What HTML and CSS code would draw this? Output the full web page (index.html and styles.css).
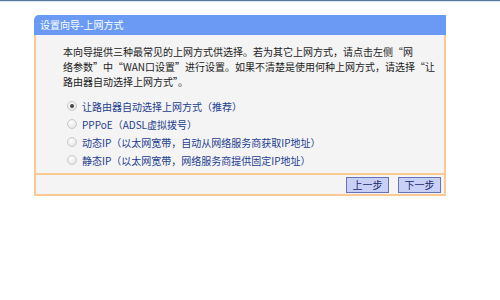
FILE: index.html
```html
<!DOCTYPE html>
<html lang="zh-CN">

<head>
  <meta charset="UTF-8">
  <title>设置向导</title>
  <link rel="stylesheet" href="styles.css">
</head>

<body>
  <div class="topline"></div>
  <div class="panel">
    <div class="panel_title">设置向导-上网方式</div>
    <div class="panel_body">
      <p class="intro">本向导提供三种最常见的上网方式供选择。若为其它上网方式，请点击左侧“网<br>络参数”中“WAN口设置”进行设置。如果不清楚是使用何种上网方式，请选择“让<br>路由器自动选择上网方式”。</p>
      <ul class="options">
        <li><span class="radio checked"></span>让路由器自动选择上网方式（推荐）</li>
        <li><span class="radio"></span>PPPoE（ADSL虚拟拨号）</li>
        <li><span class="radio"></span>动态IP（以太网宽带，自动从网络服务商获取IP地址）</li>
        <li><span class="radio"></span>静态IP（以太网宽带，网络服务商提供固定IP地址）</li>
      </ul>
    </div>
    <div class="panel_foot">
      <button class="btn">上一步</button>
      <button class="btn">下一步</button>
    </div>
  </div>
</body>

</html>
```
FILE: styles.css
```css
body {
  margin: 0;
  background: #fff;
  font-family: "Noto Sans CJK SC", "Liberation Sans", sans-serif;
  font-size: 10px;
  color: #222;
}

.topline {
  height: 1px;
  background: #56789f;
  border-bottom: 1px solid #d9e3ee;
}

/* 面板 */
.panel {
  width: 412px;
  margin: 13px 0 0 34px;
}

.panel_title {
  height: 20px;
  line-height: 20px;
  padding-left: 6px;
  background: #6a9af4;
  color: #fff;
  border-radius: 5px 0 0 0;
}

.panel_body {
  background: #f4f4f4;
  border-left: 2px solid #fbc993;
  border-right: 2px solid #fbc993;
  padding: 9px 0 6px 27px;
  height: 123px;
}

.intro {
  margin: 0;
  width: 375px;
  line-height: 15px;
  white-space: nowrap;
}

.options {
  list-style: none;
  margin: 8px 0 0 4px;
  padding: 0;
}

.options li {
  display: flex;
  align-items: center;
  height: 18px;
  color: #1d3d8f;
}

.radio {
  width: 8px;
  height: 8px;
  margin-right: 5px;
  border-radius: 50%;
  border: 1px solid #c9c9c9;
  background: radial-gradient(circle at 40% 35%, #fff, #dcdcdc);
  display: flex;
  align-items: center;
  justify-content: center;
}

.radio.checked::after {
  content: '';
  width: 4px;
  height: 4px;
  border-radius: 50%;
  background: #444;
}

.panel_foot {
  background: #f4f4f4;
  border: 2px solid #fbc993;
  height: 19px;
  display: flex;
  justify-content: flex-end;
  align-items: center;
  gap: 9px;
  padding-right: 3px;
}

.btn {
  width: 43px;
  height: 16px;
  padding: 0;
  font-family: inherit;
  font-size: 10px;
  line-height: 14px;
  color: #1a2a6a;
  background: #c9d0f6;
  border: 1px solid #6573b8;
  border-radius: 0;
}
```
